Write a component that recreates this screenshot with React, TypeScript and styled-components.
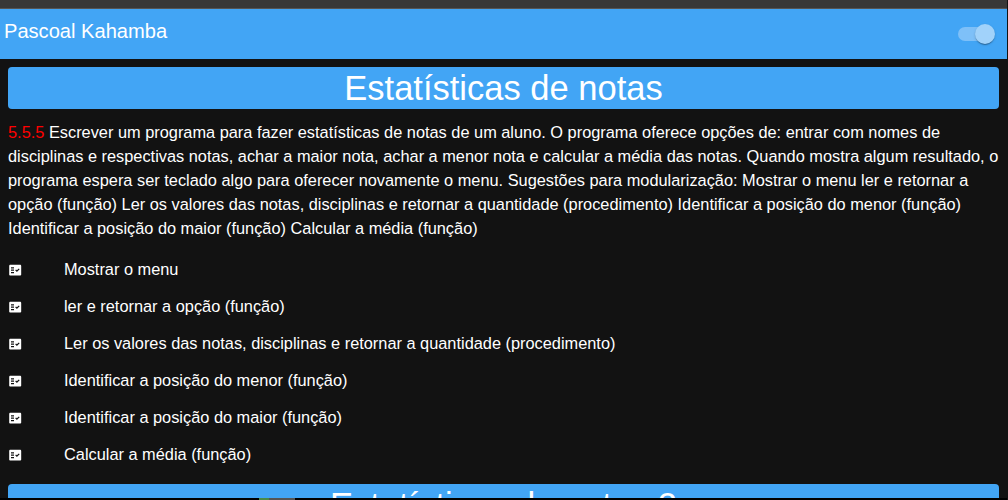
import React from "react";
import styled, { createGlobalStyle } from "styled-components";

const GlobalStyle = createGlobalStyle`
  html, body {
    margin: 0;
    height: 100%;
    overflow: hidden;
    background: #121212;
    font-family: "Liberation Sans", Arial, sans-serif;
    color: #fff;
  }
`;

const Page = styled.div`
  width: 1007px;
  height: 500px;
  display: flex;
  flex-direction: column;
  overflow: hidden;
`;
const TopStrip = styled.div`
  height: 9px;
  flex: none;
  box-sizing: border-box;
  background: #383838;
  border-bottom: 1px solid #555;
`;
const AppBar = styled.header`
  height: 50px;
  flex: none;
  box-sizing: border-box;
  padding: 0 15px 5px 4px;
  background: #42a5f5;
  display: flex;
  align-items: center;
  justify-content: space-between;
  font-size: 20.1px;
`;
const SwitchTrack = styled.div`
  position: relative;
  width: 34px;
  height: 14px;
  margin-top: 5px;
  border-radius: 7px;
  background: #7ec0f8;
`;
const SwitchThumb = styled.span`
  position: absolute;
  top: -3px;
  right: -3px;
  width: 20px;
  height: 20px;
  border-radius: 50%;
  background: #a1d2fa;
  box-shadow: 0 2px 1px -1px rgba(0, 0, 0, 0.2), 0 1px 1px rgba(0, 0, 0, 0.14),
    0 1px 3px rgba(0, 0, 0, 0.12);
`;
const Main = styled.main`
  flex: 1;
  min-height: 0;
  overflow: hidden;
  padding: 8px 8px 0;
`;
const Title = styled.h1`
  margin: 0;
  height: 42px;
  border-radius: 4px;
  background: #42a5f5;
  font-size: 34.5px;
  font-weight: 400;
  line-height: 42px;
  text-align: center;
`;
const Description = styled.p`
  margin: 11px 0 0;
  font-size: 16.35px;
  line-height: 24px;
`;
const Ref = styled.span`
  color: #f00;
`;
const Items = styled.ul`
  list-style: none;
  margin: 11px 0 11px;
  padding: 0;
`;
const Item = styled.li`
  height: 37px;
  display: flex;
  align-items: center;
  font-size: 16.35px;
`;
const ItemIcon = styled.svg`
  width: 14.4px;
  height: 14.4px;
  flex: none;
  margin: 2px 41.6px 0 0;
`;
const BottomStrip = styled.div`
  height: 2px;
  flex: none;
  padding-left: 259px;
  display: flex;
  background: #000;
`;
const TaskSegment = styled.span<{ $color: string; $width: number }>`
  width: ${(props) => props.$width}px;
  background: ${(props) => props.$color};
`;

const items = [
  "Mostrar o menu",
  "ler e retornar a opção (função)",
  "Ler os valores das notas, disciplinas e retornar a quantidade (procedimento)",
  "Identificar a posição do menor (função)",
  "Identificar a posição do maior (função)",
  "Calcular a média (função)",
];

const App: React.FC = () => {
  return (
    <Page>
      <GlobalStyle />
      <TopStrip />
      <AppBar>
        Pascoal Kahamba
        <SwitchTrack>
          <SwitchThumb />
        </SwitchTrack>
      </AppBar>
      <Main>
        <Title>Estatísticas de notas</Title>
        <Description>
          <Ref>5.5.5</Ref> Escrever um programa para fazer estatísticas de notas
          de um aluno. O programa oferece opções de: entrar com nomes de
          disciplinas e respectivas notas, achar a maior nota, achar a menor
          nota e calcular a média das notas. Quando mostra algum resultado, o
          programa espera ser teclado algo para oferecer novamente o menu.
          Sugestões para modularização: Mostrar o menu ler e retornar a opção
          (função) Ler os valores das notas, disciplinas e retornar a quantidade
          (procedimento) Identificar a posição do menor (função) Identificar a
          posição do maior (função) Calcular a média (função)
        </Description>
        <Items>
          {items.map((text) => (
            <Item key={text}>
              <ItemIcon viewBox="0 0 24 24">
                <path
                  fill="#fff"
                  fillRule="evenodd"
                  d="M20 3H4c-1.1 0-2 .9-2 2v14c0 1.1.9 2 2 2h16c1.1 0 2-.9 2-2V5c0-1.1-.9-2-2-2zM10 17H5v-2h5v2zm0-4H5v-2h5v2zm0-4H5V7h5v2zm4.82 6L12 12.16l1.41-1.41 1.41 1.42L17.99 9l1.42 1.42L14.82 15z"
                />
              </ItemIcon>
              {text}
            </Item>
          ))}
        </Items>
        <Title>Estatísticas de notas 2</Title>
      </Main>
      <BottomStrip>
        <TaskSegment $color="#4a8a4a" $width={10} />
        <TaskSegment $color="#555" $width={26} />
      </BottomStrip>
    </Page>
  );
};

export default App;
